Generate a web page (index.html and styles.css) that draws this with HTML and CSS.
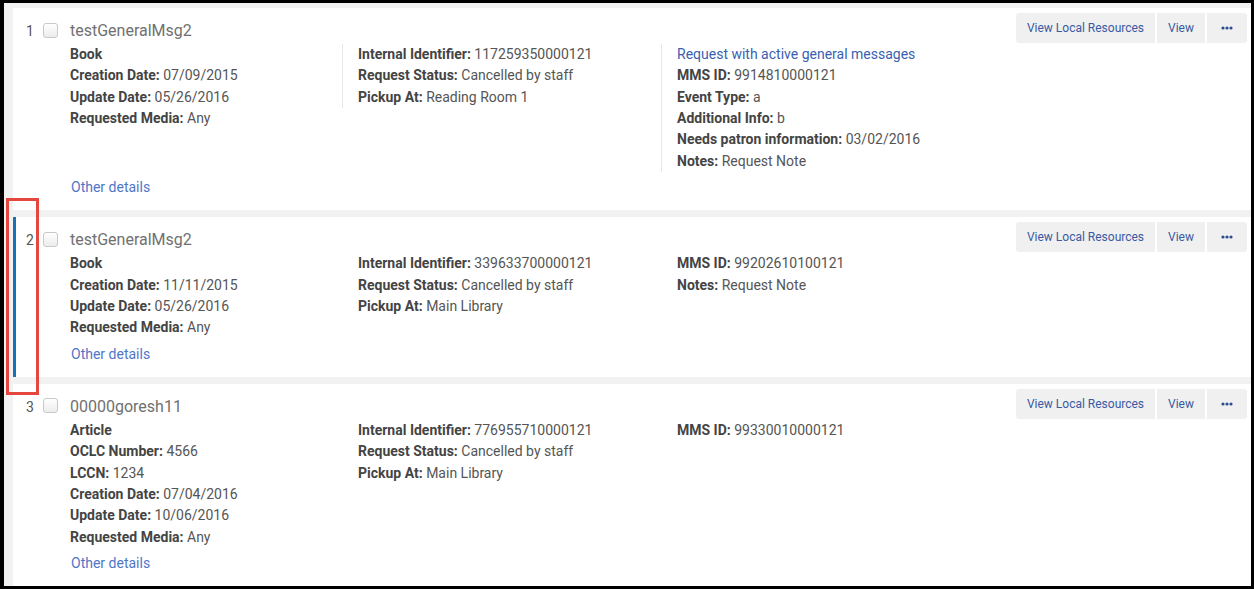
FILE: index.html
```html
<!DOCTYPE html>
<html lang="en">
<head>
    <meta charset="UTF-8">
    <title>Requests</title>
    <link rel="stylesheet" href="styles.css">
</head>
<body>
    <div class="frame">
        <div class="list">

            <div class="card">
                <div class="main">
                    <div class="head">
                        <span class="num">1</span>
                        <span class="check"></span>
                        <span class="title">testGeneralMsg2</span>
                    </div>
                    <div class="cols">
                        <div class="col">
                            <div class="line"><b>Book</b></div>
                            <div class="line"><b>Creation Date:</b> 07/09/2015</div>
                            <div class="line"><b>Update Date:</b> 05/26/2016</div>
                            <div class="line"><b>Requested Media:</b> Any</div>
                        </div>
                        <div class="col divided">
                            <div class="line"><b>Internal Identifier:</b> 117259350000121</div>
                            <div class="line"><b>Request Status:</b> Cancelled by staff</div>
                            <div class="line"><b>Pickup At:</b> Reading Room 1</div>
                        </div>
                        <div class="col divided">
                            <div class="line"><a class="link dark" href="#">Request with active general messages</a></div>
                            <div class="line"><b>MMS ID:</b> 9914810000121</div>
                            <div class="line"><b>Event Type:</b> a</div>
                            <div class="line"><b>Additional Info:</b> b</div>
                            <div class="line"><b>Needs patron information:</b> 03/02/2016</div>
                            <div class="line"><b>Notes:</b> Request Note</div>
                        </div>
                    </div>
                    <a class="link other" href="#">Other details</a>
                </div>
                <div class="actions">
                    <button class="btn">View Local Resources</button>
                    <button class="btn">View</button>
                    <button class="btn more"><svg width="12" height="4" viewBox="0 0 12 4"><circle cx="2" cy="2" r="1.6"/><circle cx="6" cy="2" r="1.6"/><circle cx="10" cy="2" r="1.6"/></svg></button>
                </div>
            </div>

            <div class="card selected">
                <div class="main">
                    <div class="head">
                        <span class="num">2</span>
                        <span class="check"></span>
                        <span class="title">testGeneralMsg2</span>
                    </div>
                    <div class="cols">
                        <div class="col">
                            <div class="line"><b>Book</b></div>
                            <div class="line"><b>Creation Date:</b> 11/11/2015</div>
                            <div class="line"><b>Update Date:</b> 05/26/2016</div>
                            <div class="line"><b>Requested Media:</b> Any</div>
                        </div>
                        <div class="col">
                            <div class="line"><b>Internal Identifier:</b> 339633700000121</div>
                            <div class="line"><b>Request Status:</b> Cancelled by staff</div>
                            <div class="line"><b>Pickup At:</b> Main Library</div>
                        </div>
                        <div class="col">
                            <div class="line"><b>MMS ID:</b> 99202610100121</div>
                            <div class="line"><b>Notes:</b> Request Note</div>
                        </div>
                    </div>
                    <a class="link other" href="#">Other details</a>
                </div>
                <div class="actions">
                    <button class="btn">View Local Resources</button>
                    <button class="btn">View</button>
                    <button class="btn more"><svg width="12" height="4" viewBox="0 0 12 4"><circle cx="2" cy="2" r="1.6"/><circle cx="6" cy="2" r="1.6"/><circle cx="10" cy="2" r="1.6"/></svg></button>
                </div>
            </div>

            <div class="card">
                <div class="main">
                    <div class="head">
                        <span class="num">3</span>
                        <span class="check"></span>
                        <span class="title">00000goresh11</span>
                    </div>
                    <div class="cols">
                        <div class="col">
                            <div class="line"><b>Article</b></div>
                            <div class="line"><b>OCLC Number:</b> 4566</div>
                            <div class="line"><b>LCCN:</b> 1234</div>
                            <div class="line"><b>Creation Date:</b> 07/04/2016</div>
                            <div class="line"><b>Update Date:</b> 10/06/2016</div>
                            <div class="line"><b>Requested Media:</b> Any</div>
                        </div>
                        <div class="col">
                            <div class="line"><b>Internal Identifier:</b> 776955710000121</div>
                            <div class="line"><b>Request Status:</b> Cancelled by staff</div>
                            <div class="line"><b>Pickup At:</b> Main Library</div>
                        </div>
                        <div class="col">
                            <div class="line"><b>MMS ID:</b> 99330010000121</div>
                        </div>
                    </div>
                    <a class="link other" href="#">Other details</a>
                </div>
                <div class="actions">
                    <button class="btn">View Local Resources</button>
                    <button class="btn">View</button>
                    <button class="btn more"><svg width="12" height="4" viewBox="0 0 12 4"><circle cx="2" cy="2" r="1.6"/><circle cx="6" cy="2" r="1.6"/><circle cx="10" cy="2" r="1.6"/></svg></button>
                </div>
            </div>

        </div>
        <div class="highlight"></div>
    </div>
</body>
</html>
```

FILE: styles.css
```css
*{
    padding: 0;
    margin: 0;
    box-sizing: border-box;
}
body{
    background-color: #000;
    padding: 3px 3px 3px 4px;
    font-family: Roboto, "Liberation Sans", sans-serif;
    font-size: 14px;
    color: #555;
}
.frame{
    position: relative;
    height: 583px;
    overflow: hidden;
    background-color: #f2f2f2;
}
.list{
    display: flex;
    flex-direction: column;
    gap: 7px;
    padding: 5px 0 0 9px;
}
.card{
    display: flex;
    background-color: #fff;
    padding: 5px 4px 12px 13px;
}
.card.selected{
    box-shadow: inset 3px 0 0 #1a72b6;
}
.main{
    flex: 1;
}
.head{
    display: flex;
    align-items: center;
    height: 24px;
    margin-top: 6px;
}
.num{
    width: 17px;
    color: #555;
    line-height: 24px;
}
.check{
    width: 15px;
    height: 15px;
    margin-top: -2px;
    border: 1px solid #c9c9c9;
    border-radius: 3px;
    background: linear-gradient(#fff, #ececec);
}
.title{
    margin-left: 12px;
    font-size: 16px;
    color: #707070;
    line-height: 24px;
}
.cols{
    display: grid;
    grid-template-columns: 272px 319px 1fr;
    align-items: start;
    margin: 1px 0 0 44px;
}
.col{
    padding-left: 16px;
}
.col:first-child{
    padding-left: 0;
}
.col.divided{
    border-left: 1px solid #e8e8e8;
    padding-left: 15px;
}
.line{
    line-height: 21.33px;
    white-space: nowrap;
}
.line b{
    color: #444;
    font-weight: 700;
}
.link{
    color: #5076c8;
    text-decoration: none;
}
.link.dark{
    color: #3a5fb0;
}
.other{
    display: block;
    margin: 5px 0 0 45px;
    line-height: 21.33px;
    width: max-content;
}
.actions{
    display: flex;
    gap: 2px;
    align-self: flex-start;
}
.btn{
    height: 30px;
    padding: 0;
    border: 0;
    background-color: #f0f0f0;
    font-family: Roboto, "Liberation Sans", sans-serif;
    font-size: 12px;
    color: #3a5aa3;
    white-space: nowrap;
}
.btn:first-child{
    width: 139px;
    border-radius: 3px 0 0 3px;
}
.btn:nth-child(2){
    width: 48px;
}
.btn.more{
    width: 40px;
    border-radius: 0 3px 3px 0;
    fill: #2d4b8f;
}
.btn.more svg{
    display: block;
    margin: 0 auto;
}
.highlight{
    position: absolute;
    left: 2px;
    top: 195px;
    width: 33px;
    height: 197px;
    border: 3px solid #e5473f;
}
```
